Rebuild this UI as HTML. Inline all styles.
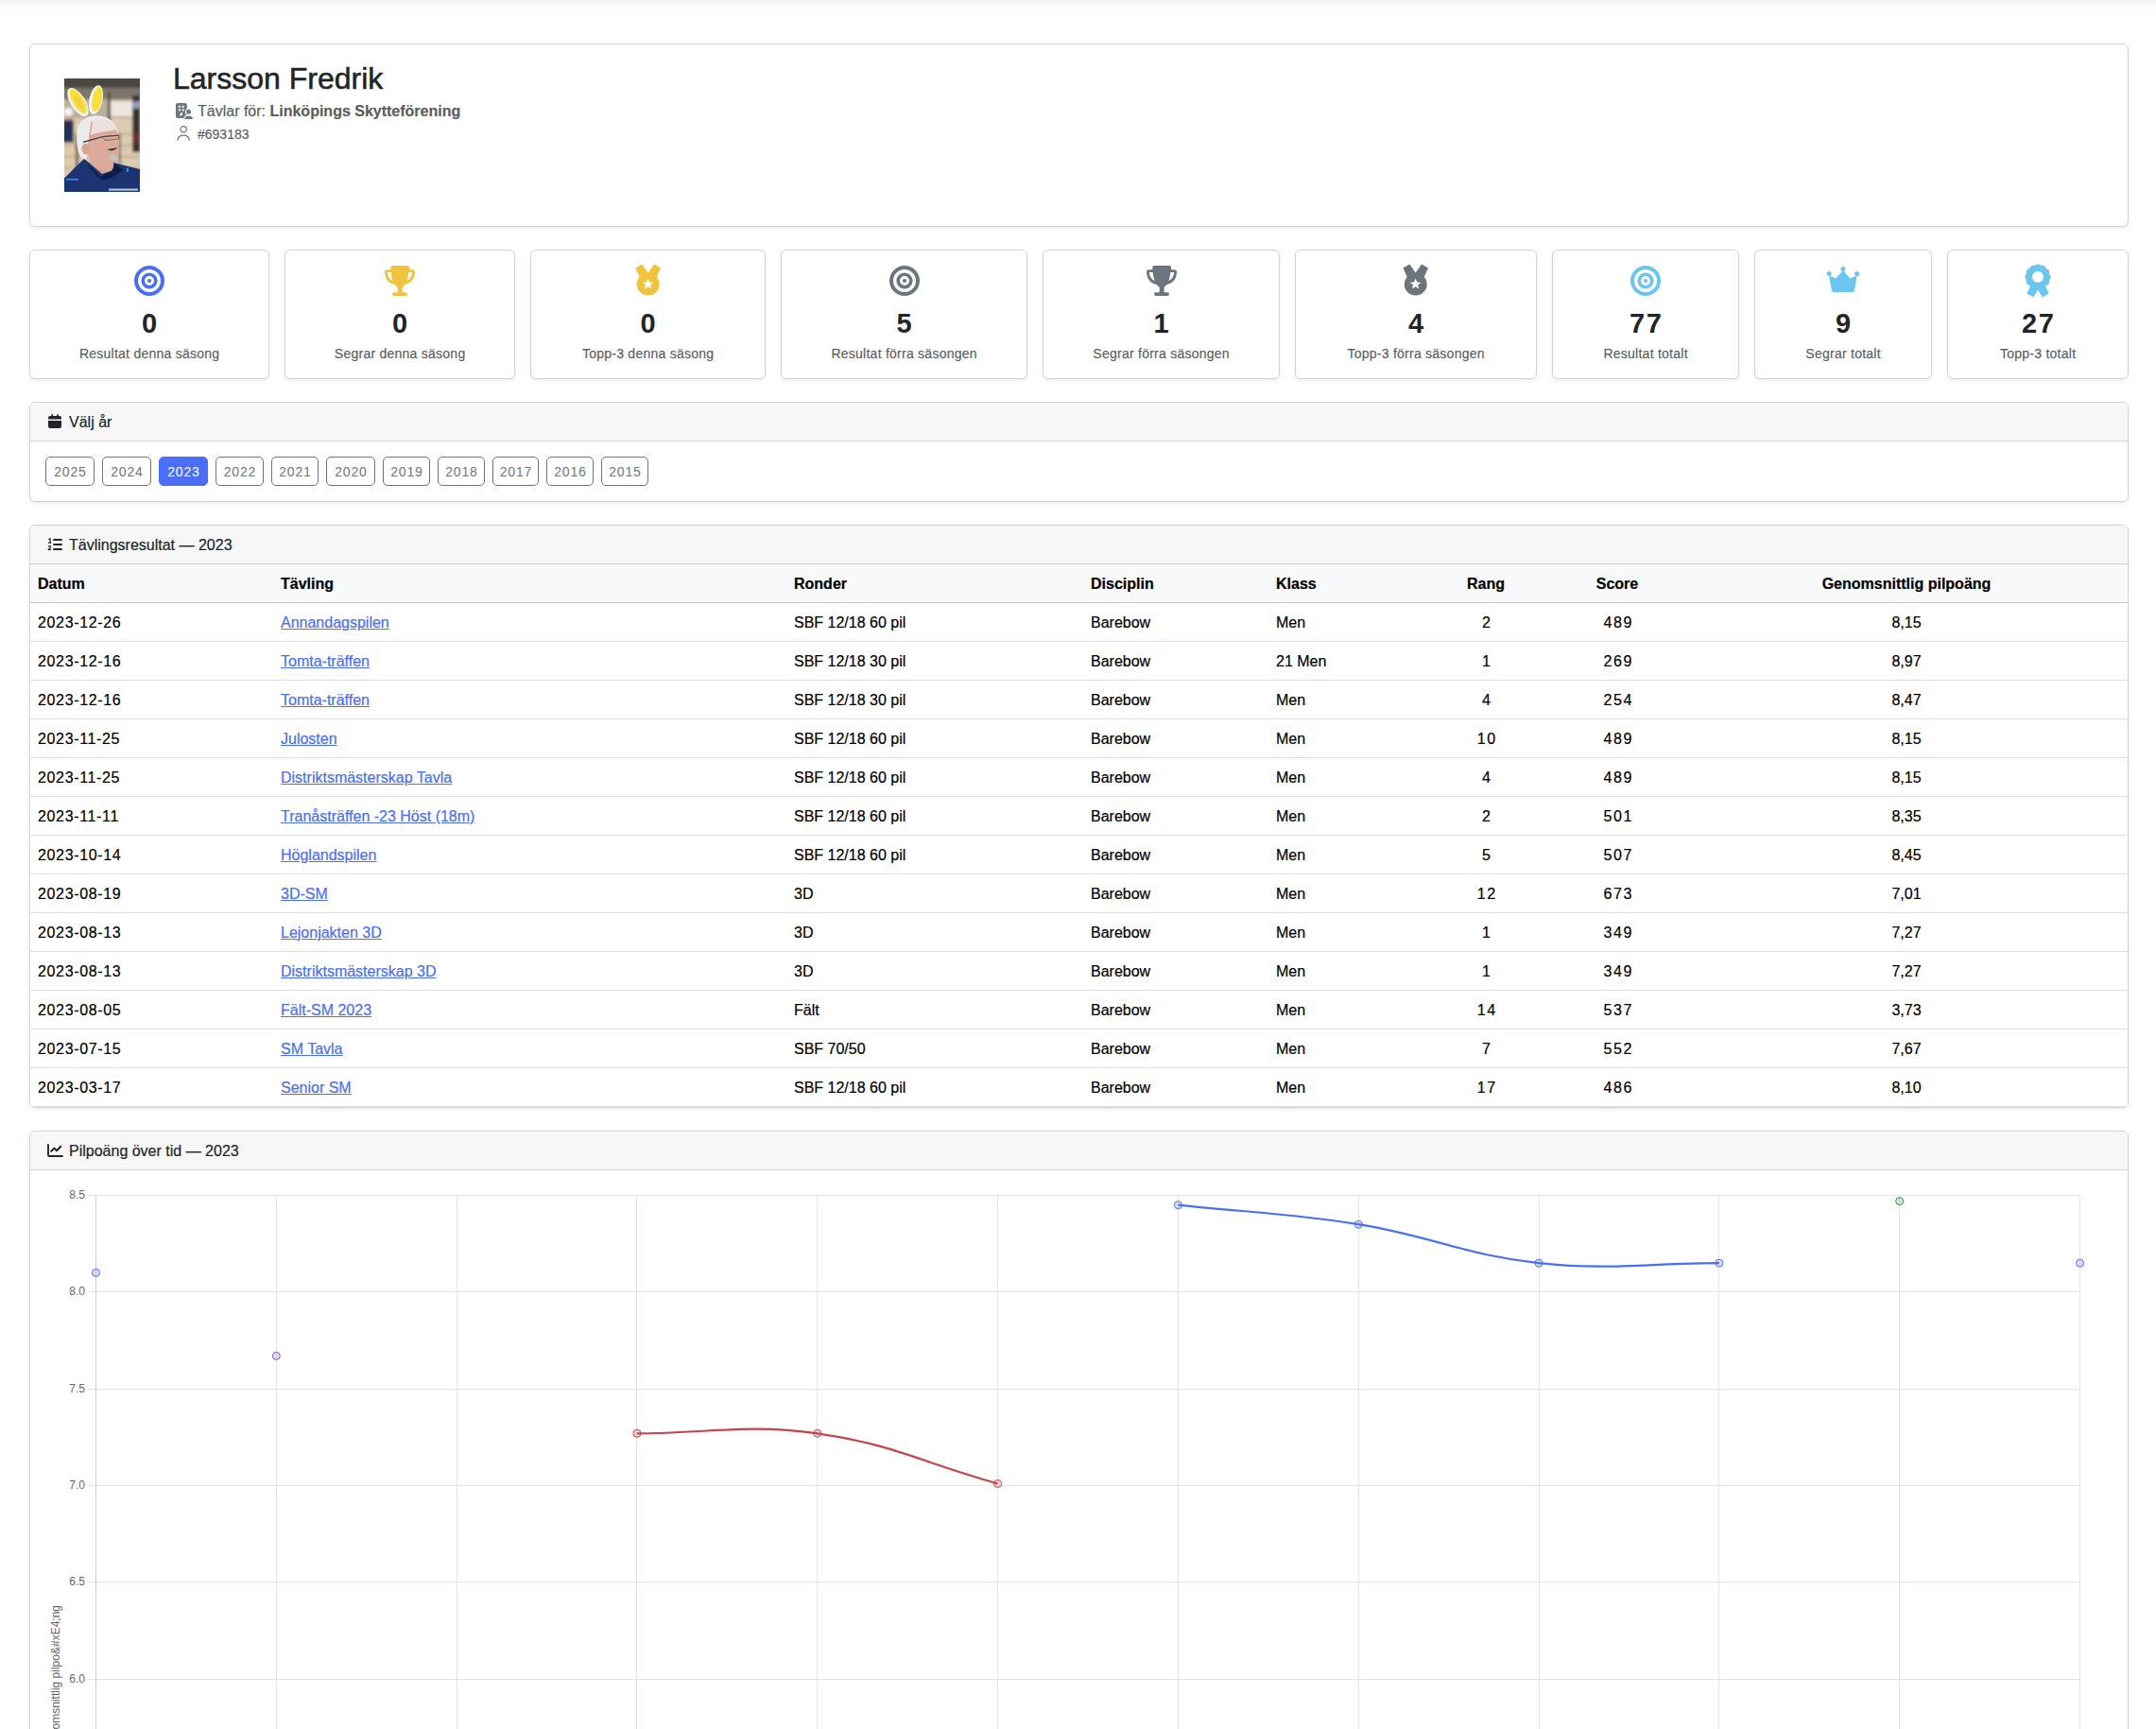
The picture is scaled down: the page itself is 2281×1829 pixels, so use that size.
<!DOCTYPE html><html><head><meta charset="utf-8"><title>Larsson Fredrik</title><style>
*{box-sizing:border-box;margin:0;padding:0}
html,body{width:2281px;height:1829px;overflow:hidden;background:#fff}
body{position:relative;font-family:"Liberation Sans",sans-serif;color:#212529;font-size:16px;line-height:1.5}
.topshade{position:absolute;left:0;top:0;width:2281px;height:16px;background:linear-gradient(to bottom,rgba(0,0,0,0.058) 0,rgba(0,0,0,0.032) 4px,rgba(0,0,0,0.012) 8px,rgba(0,0,0,0) 13px)}
.card{position:absolute;background:#fff;border:1px solid #d2d3d4;border-radius:6px;box-shadow:0 2px 4px rgba(0,0,0,0.075)}
.abs{position:absolute;white-space:nowrap}
.chead{position:absolute;left:0;top:0;right:0;height:41px;background:#f7f7f7;border-bottom:1px solid #d2d3d4;border-radius:5px 5px 0 0}
.chead .t{position:absolute;left:41px;top:9px;line-height:24px;font-size:16px;color:#212529;white-space:nowrap;-webkit-text-stroke:0.2px #212529}
.chead svg{position:absolute;left:18px;top:12px}
.stat .ic{position:absolute;left:50%;top:16px;transform:translateX(-50%)}
.stat .num{position:absolute;left:0;right:0;top:62.5px;font-size:29px;line-height:29px;letter-spacing:1.6px;padding-left:1.6px;font-weight:700;text-align:center;color:#212529}
.stat .lbl{position:absolute;left:0;right:0;top:102px;letter-spacing:0.25px;padding-left:0.25px;font-size:14px;line-height:14px;text-align:center;color:#595c5f;white-space:nowrap;-webkit-text-stroke:0.15px #595c5f}
.btn{position:absolute;top:57px;height:31px;border:1px solid #6c757d;border-radius:5px;color:#6c757d;font-size:14px;line-height:30px;text-align:center;background:#fff;letter-spacing:0.8px;padding-left:0.8px}
.btn.act{background:#4a6ef5;border-color:#4a6ef5;color:#fff}
table{position:absolute;left:0;top:41px;width:2219px;border-collapse:collapse;table-layout:fixed}
th,td{padding:9px 8px 7px;line-height:24px;font-size:16px;text-align:left;white-space:nowrap;color:#000;-webkit-text-stroke:0.2px currentColor}
thead th{background:#f8f9fa;border-bottom:1px solid #c6c7c8;font-weight:700}
tbody td{border-bottom:1px solid #dee2e6;background:#fff}
td.c,th.c{text-align:center}
td.d{letter-spacing:0.65px}
td.n{letter-spacing:1.6px;padding-left:10.6px}
a{color:#4a6ef5;text-decoration:underline;text-underline-offset:1px}
</style></head><body>
<div class="topshade"></div>
<div class="card" style="left:31px;top:46px;width:2221px;height:194px"><svg class="abs" style="left:36px;top:36px" width="80" height="120" viewBox="0 0 80 120">
<defs><filter id="bl" x="-10%" y="-10%" width="120%" height="120%"><feGaussianBlur stdDeviation="1.4"/></filter><filter id="bs" x="-10%" y="-10%" width="120%" height="120%"><feGaussianBlur stdDeviation="0.6"/></filter><clipPath id="pc"><rect width="80" height="120"/></clipPath></defs>
<g clip-path="url(#pc)">
<rect width="80" height="120" fill="#d9cab2"/>
<g filter="url(#bl)">
<rect x="-5" y="-5" width="90" height="15" fill="#4a4740"/>
<rect x="-5" y="10" width="90" height="12" fill="#7d766c"/>
<rect x="0" y="22" width="80" height="20" fill="#b9ad9c"/>
<rect x="48" y="24" width="26" height="16" fill="#ece6dc"/>
<rect x="0" y="42" width="80" height="78" fill="#ddcbb0"/>
<rect x="0" y="58" width="80" height="1.6" fill="#bda888"/>
<rect x="0" y="70" width="80" height="1.6" fill="#bda888"/>
<rect x="0" y="82" width="80" height="1.6" fill="#bda888"/>
<rect x="0" y="94" width="80" height="1.6" fill="#bda888"/>
<rect x="46" y="14" width="3" height="50" fill="#4d4740"/>
<rect x="57.5" y="58" width="2" height="34" fill="#5c5248"/>
<rect x="72" y="18" width="8" height="60" fill="#34322f"/>
<circle cx="76" cy="28" r="4" fill="#8aa2c4"/>
<rect x="74" y="58" width="6" height="9" fill="#7a2a2a"/>
<rect x="0" y="31" width="9" height="9" rx="4" fill="#f3f3f3"/>
<rect x="1" y="40" width="8" height="4" fill="#c89888"/>
<rect x="-2" y="44" width="12" height="24" fill="#263352"/>
<rect x="12" y="60" width="3" height="40" fill="#5a534b"/>
</g>
<g filter="url(#bs)">
<g transform="rotate(-32 14.5 25)"><ellipse cx="14.5" cy="25" rx="7.8" ry="17" fill="#f7f5f0"/><ellipse cx="15.2" cy="24.6" rx="5.8" ry="14.8" fill="#f6e03a"/><ellipse cx="15" cy="26" rx="2.6" ry="9" fill="#f2c544" opacity="0.7"/></g>
<g transform="rotate(12 33.5 22.5)"><ellipse cx="33.5" cy="22.5" rx="7" ry="15.5" fill="#f7f5f0"/><ellipse cx="34.5" cy="21.8" rx="5.2" ry="13.2" fill="#f5df38"/></g>
<path d="M25 88 L52 90 L54 104 L36 108 Z" fill="#d4a494"/>
<path d="M14 52 C18 40 34 36 46 42 C54 46 57 54 57 60 L30 66 C26 74 24 84 22 88 C16 84 11 72 14 52 Z" fill="#eeecea"/>
<path d="M28 46 C40 40 56 48 57.5 62 C59 74 58 88 52 95 C46 100 36 98 30 92 C25 86 24 74 26 62 Z" fill="#dcaa9c"/>
<path d="M30 44 C40 40 52 44 56 54 C48 56 36 56 28 60 Z" fill="#ede0dc"/>
<ellipse cx="23" cy="74.5" rx="4.5" ry="6" fill="#d6a292"/>
<path d="M20 67.4 L41 61.5 L57.5 60.2" stroke="#2e2e2e" stroke-width="1.1" fill="none"/>
<path d="M41 61.5 L57.5 60 L57.8 64 L43 65.5 Z" fill="none" stroke="#555" stroke-width="0.7"/>
<path d="M45.5 75 C49 77.5 54 76.5 56.5 72.6 C53 73.5 49 74 45.5 75 Z" fill="#4a2e26"/>
<path d="M47 73.9 L56 72.7" stroke="#d8cfc0" stroke-width="0.8"/>
<ellipse cx="52.5" cy="83.8" rx="5" ry="3.2" fill="#c9c2bc"/>
<path d="M0 105.6 L20.8 85 L26 89 L40 101 L52 97 L52 89 L80 96 L80 120 L0 120 Z" fill="#1d3672"/>
<path d="M20.8 85 L38 104 L50 98 L54 90 L63 97 L52 104 L42 108 L34 103 Z" fill="#101f48"/>
<rect x="66" y="94.5" width="2" height="4.5" fill="#3e84e8"/>
<rect x="2" y="106" width="13" height="1.6" fill="#3e84e8"/>
<rect x="47" y="116.5" width="31" height="2.2" fill="#e4eaf4" opacity="0.75"/>
</g>
</g>
</svg><div class="abs" style="left:151px;top:19.5px;font-size:32px;line-height:32px;color:#212529;-webkit-text-stroke:0.55px #212529">Larsson Fredrik</div><svg class="abs" style="left:154px;top:62px" width="19" height="18" viewBox="0 0 19 18">
<rect x="0" y="0" width="11.8" height="16" rx="2" fill="#6c757d"/>
<rect x="2.8" y="2.8" width="2.2" height="2" fill="#fff"/><rect x="6.6" y="2.8" width="2.2" height="2" fill="#fff"/>
<rect x="2.8" y="6.4" width="2.2" height="2" fill="#fff"/><rect x="6.6" y="6.4" width="2.2" height="2" fill="#fff"/>
<path d="M4 13.5 L5.2 10.3 L7.4 10.3 L6.2 13.5 Z" fill="#fff"/>
<circle cx="13.5" cy="9.3" r="3.6" fill="#fff"/><circle cx="13.5" cy="9.3" r="2.5" fill="#6c757d"/>
<path d="M8.2 17.4 C8.2 13.6 10.5 12.4 13.6 12.4 C16.7 12.4 18.9 13.6 18.9 17.4 Z" fill="#fff"/>
<path d="M9.4 17 C9.4 14.6 11 13.6 13.6 13.6 C16.2 13.6 17.8 14.6 17.8 17 Z" fill="#6c757d"/>
</svg><div class="abs" style="left:177px;top:63px;font-size:16px;line-height:16px;color:#595c5f;-webkit-text-stroke:0.15px #595c5f">Tävlar för: <b style="color:#595c5f">Linköpings Skytteförening</b></div><svg class="abs" style="left:155px;top:86px" width="15" height="16" viewBox="0 0 15 16">
<circle cx="7.1" cy="3.8" r="3.1" fill="none" stroke="#6c757d" stroke-width="1.2"/>
<path d="M0.9 15.6 C1.2 11.8 3.6 10.2 7.1 10.2 C10.6 10.2 13 11.8 13.3 15.6" fill="none" stroke="#6c757d" stroke-width="1.2"/>
</svg><div class="abs" style="left:177px;top:88px;font-size:14px;line-height:14px;color:#595c5f;-webkit-text-stroke:0.15px #595c5f">#693183</div></div>
<div class="card stat" style="left:31px;top:264px;width:254px;height:137px"><svg class="ic" width="32" height="32" viewBox="0 0 32 32"><circle cx="16" cy="16" r="14" fill="none" stroke="#4a6ef5" stroke-width="4"/><circle cx="16" cy="16" r="6.8" fill="none" stroke="#4a6ef5" stroke-width="3.6"/><circle cx="16" cy="16" r="2.1" fill="#4a6ef5"/></svg><div class="num">0</div><div class="lbl">Resultat denna säsong</div></div>
<div class="card stat" style="left:301px;top:264px;width:244px;height:137px"><svg class="ic" width="32" height="32" viewBox="0 0 32 32"><path fill="#f0c33c" d="M8.3 0 H24 A2 2 0 0 1 26 2 V4.3 H29.6 A2.4 2.4 0 0 1 32 6.8 C31.6 13.5 28.5 18.6 21.6 19.9 L18.6 23 V28.2 H22.1 A1.9 1.9 0 0 1 22.1 32 H9.9 A1.9 1.9 0 0 1 9.9 28.2 H13.7 V23 L10.4 19.9 C3.5 18.6 0.4 13.5 0 6.8 A2.4 2.4 0 0 1 2.4 4.3 H6.3 V2 A2 2 0 0 1 8.3 0 Z M2.8 7 C3.2 11.8 5.2 14.8 8.7 16 C7.6 13.4 7 10.4 6.7 7 Z M29.2 7 H25.3 C25 10.4 24.4 13.4 23.3 16 C26.8 14.8 28.8 11.8 29.2 7 Z"/></svg><div class="num">0</div><div class="lbl">Segrar denna säsong</div></div>
<div class="card stat" style="left:561px;top:264px;width:249px;height:137px"><svg class="ic" style="top:14px" width="28" height="34" viewBox="0 0 28 34"><path fill="#f0c33c" d="M0.4 4.6 L7.3 0.4 L13.6 9.6 L20.1 0.4 L27 4.6 L22.8 13.8 A12 12 0 1 1 4.6 13.8 Z M13.60 15.50 L15.19 19.42 L19.40 19.71 L16.17 22.43 L17.19 26.54 L13.60 24.30 L10.01 26.54 L11.03 22.43 L7.80 19.71 L12.01 19.42 Z" fill-rule="evenodd"/></svg><div class="num">0</div><div class="lbl">Topp-3 denna säsong</div></div>
<div class="card stat" style="left:826px;top:264px;width:261px;height:137px"><svg class="ic" width="32" height="32" viewBox="0 0 32 32"><circle cx="16" cy="16" r="14" fill="none" stroke="#6c757d" stroke-width="4"/><circle cx="16" cy="16" r="6.8" fill="none" stroke="#6c757d" stroke-width="3.6"/><circle cx="16" cy="16" r="2.1" fill="#6c757d"/></svg><div class="num">5</div><div class="lbl">Resultat förra säsongen</div></div>
<div class="card stat" style="left:1103px;top:264px;width:251px;height:137px"><svg class="ic" width="32" height="32" viewBox="0 0 32 32"><path fill="#6c757d" d="M8.3 0 H24 A2 2 0 0 1 26 2 V4.3 H29.6 A2.4 2.4 0 0 1 32 6.8 C31.6 13.5 28.5 18.6 21.6 19.9 L18.6 23 V28.2 H22.1 A1.9 1.9 0 0 1 22.1 32 H9.9 A1.9 1.9 0 0 1 9.9 28.2 H13.7 V23 L10.4 19.9 C3.5 18.6 0.4 13.5 0 6.8 A2.4 2.4 0 0 1 2.4 4.3 H6.3 V2 A2 2 0 0 1 8.3 0 Z M2.8 7 C3.2 11.8 5.2 14.8 8.7 16 C7.6 13.4 7 10.4 6.7 7 Z M29.2 7 H25.3 C25 10.4 24.4 13.4 23.3 16 C26.8 14.8 28.8 11.8 29.2 7 Z"/></svg><div class="num">1</div><div class="lbl">Segrar förra säsongen</div></div>
<div class="card stat" style="left:1370px;top:264px;width:256px;height:137px"><svg class="ic" style="top:14px" width="28" height="34" viewBox="0 0 28 34"><path fill="#6c757d" d="M0.4 4.6 L7.3 0.4 L13.6 9.6 L20.1 0.4 L27 4.6 L22.8 13.8 A12 12 0 1 1 4.6 13.8 Z M13.60 15.50 L15.19 19.42 L19.40 19.71 L16.17 22.43 L17.19 26.54 L13.60 24.30 L10.01 26.54 L11.03 22.43 L7.80 19.71 L12.01 19.42 Z" fill-rule="evenodd"/></svg><div class="num">4</div><div class="lbl">Topp-3 förra säsongen</div></div>
<div class="card stat" style="left:1642px;top:264px;width:198px;height:137px"><svg class="ic" width="32" height="32" viewBox="0 0 32 32"><circle cx="16" cy="16" r="14" fill="none" stroke="#6ac6ee" stroke-width="4"/><circle cx="16" cy="16" r="6.8" fill="none" stroke="#6ac6ee" stroke-width="3.6"/><circle cx="16" cy="16" r="2.1" fill="#6ac6ee"/></svg><div class="num">77</div><div class="lbl">Resultat totalt</div></div>
<div class="card stat" style="left:1856px;top:264px;width:188px;height:137px"><svg class="ic" style="top:17px" width="35" height="28" viewBox="0 0 35 28"><g fill="#6ac6ee"><circle cx="2.7" cy="7.6" r="2.5"/><circle cx="17.4" cy="2.6" r="2.5"/><circle cx="32.1" cy="7.6" r="2.5"/><path d="M2.6 9.5 L9.8 12.4 L17.4 4 L25 12.4 L32.2 9.5 L29.6 24 A3.4 3.4 0 0 1 26.3 27.2 H8.5 A3.4 3.4 0 0 1 5.2 24 Z"/></g></svg><div class="num">9</div><div class="lbl">Segrar totalt</div></div>
<div class="card stat" style="left:2060px;top:264px;width:192px;height:137px"><svg class="ic" style="top:14px" width="28" height="36" viewBox="0 0 28 36"><path fill="#6ac6ee" fill-rule="evenodd" d="M14.00 0.10 L17.26 1.83 L20.95 1.96 L22.91 5.09 L26.04 7.05 L26.17 10.74 L27.90 14.00 L26.17 17.26 L26.04 20.95 L22.91 22.91 L20.95 26.04 L17.26 26.17 L14.00 27.90 L10.74 26.17 L7.05 26.04 L5.09 22.91 L1.96 20.95 L1.83 17.26 L0.10 14.00 L1.83 10.74 L1.96 7.05 L5.09 5.09 L7.05 1.96 L10.74 1.83 Z M14 8 A6 6 0 1 0 14 20 A6 6 0 1 0 14 8 Z"/><path fill="#6ac6ee" d="M6.2 23.5 L2.3 31.6 L9.3 35.6 L14 27.6 L18.7 35.6 L25.7 31.6 L21.8 23.5 Z"/></svg><div class="num">27</div><div class="lbl">Topp-3 totalt</div></div>
<div class="card" style="left:31px;top:425px;width:2221px;height:106px"><div class="chead"><svg width="15" height="15" viewBox="0 0 15 15" style="left:19px;top:12px" fill="#212529"><rect x="3.3" y="0.1" width="1.7" height="3" rx="0.85"/><rect x="9.2" y="0.1" width="1.7" height="3" rx="0.85"/><path d="M0 4.1 A2 2 0 0 1 2 2.1 H12 A2 2 0 0 1 14 4.1 V5.5 H0 Z"/><path d="M0 7.1 H14 V12.9 A2 2 0 0 1 12 14.9 H2 A2 2 0 0 1 0 12.9 Z"/></svg><div class="t">Välj år</div></div><div class="btn" style="left:16px;width:52px">2025</div><div class="btn" style="left:76px;width:52px">2024</div><div class="btn act" style="left:136px;width:52px">2023</div><div class="btn" style="left:196px;width:51px">2022</div><div class="btn" style="left:255px;width:50px">2021</div><div class="btn" style="left:313px;width:52px">2020</div><div class="btn" style="left:373px;width:50px">2019</div><div class="btn" style="left:431px;width:50px">2018</div><div class="btn" style="left:489px;width:49px">2017</div><div class="btn" style="left:546px;width:50px">2016</div><div class="btn" style="left:604px;width:50px">2015</div></div>
<div class="card" style="left:31px;top:555px;width:2221px;height:617px"><div class="chead"><svg width="16" height="14" viewBox="0 0 16 14" style="top:13px" fill="#212529"><rect x="6.1" y="1" width="9.8" height="1.9" rx="0.9"/><rect x="6.1" y="6" width="9.8" height="1.9" rx="0.9"/><rect x="6.1" y="11" width="9.8" height="1.9" rx="0.9"/><path d="M1.2 1.2 L2.6 0.3 H3.7 V4.6 H4.3 V5.7 H1 V4.6 H2.5 V1.6 L1.2 2.3 Z"/><path d="M0.8 9.6 C0.9 8.6 1.6 8.1 2.5 8.1 C3.5 8.1 4.2 8.7 4.2 9.5 C4.2 10.2 3.8 10.7 3.1 11.2 L2.3 11.9 H4.3 V13.1 H0.6 V12.1 L2.3 10.6 C2.8 10.2 3 9.9 3 9.6 C3 9.2 2.8 9 2.4 9 C2.1 9 1.9 9.3 1.9 9.7 Z"/></svg><div class="t">Tävlingsresultat — 2023</div></div><table><colgroup><col style="width:257px"><col style="width:543px"><col style="width:314px"><col style="width:196px"><col style="width:163px"><col style="width:134px"><col style="width:144px"><col style="width:468px"></colgroup><thead><tr><th>Datum</th><th>Tävling</th><th>Ronder</th><th>Disciplin</th><th>Klass</th><th class="c">Rang</th><th class="c">Score</th><th class="c">Genomsnittlig pilpoäng</th></tr></thead><tbody><tr><td class="d">2023-12-26</td><td><a href="#">Annandagspilen</a></td><td>SBF 12/18 60 pil</td><td>Barebow</td><td>Men</td><td class="c n">2</td><td class="c n">489</td><td class="c">8,15</td></tr><tr><td class="d">2023-12-16</td><td><a href="#">Tomta-träffen</a></td><td>SBF 12/18 30 pil</td><td>Barebow</td><td>21 Men</td><td class="c n">1</td><td class="c n">269</td><td class="c">8,97</td></tr><tr><td class="d">2023-12-16</td><td><a href="#">Tomta-träffen</a></td><td>SBF 12/18 30 pil</td><td>Barebow</td><td>Men</td><td class="c n">4</td><td class="c n">254</td><td class="c">8,47</td></tr><tr><td class="d">2023-11-25</td><td><a href="#">Julosten</a></td><td>SBF 12/18 60 pil</td><td>Barebow</td><td>Men</td><td class="c n">10</td><td class="c n">489</td><td class="c">8,15</td></tr><tr><td class="d">2023-11-25</td><td><a href="#">Distriktsmästerskap Tavla</a></td><td>SBF 12/18 60 pil</td><td>Barebow</td><td>Men</td><td class="c n">4</td><td class="c n">489</td><td class="c">8,15</td></tr><tr><td class="d">2023-11-11</td><td><a href="#">Tranåsträffen -23 Höst (18m)</a></td><td>SBF 12/18 60 pil</td><td>Barebow</td><td>Men</td><td class="c n">2</td><td class="c n">501</td><td class="c">8,35</td></tr><tr><td class="d">2023-10-14</td><td><a href="#">Höglandspilen</a></td><td>SBF 12/18 60 pil</td><td>Barebow</td><td>Men</td><td class="c n">5</td><td class="c n">507</td><td class="c">8,45</td></tr><tr><td class="d">2023-08-19</td><td><a href="#">3D-SM</a></td><td>3D</td><td>Barebow</td><td>Men</td><td class="c n">12</td><td class="c n">673</td><td class="c">7,01</td></tr><tr><td class="d">2023-08-13</td><td><a href="#">Lejonjakten 3D</a></td><td>3D</td><td>Barebow</td><td>Men</td><td class="c n">1</td><td class="c n">349</td><td class="c">7,27</td></tr><tr><td class="d">2023-08-13</td><td><a href="#">Distriktsmästerskap 3D</a></td><td>3D</td><td>Barebow</td><td>Men</td><td class="c n">1</td><td class="c n">349</td><td class="c">7,27</td></tr><tr><td class="d">2023-08-05</td><td><a href="#">Fält-SM 2023</a></td><td>Fält</td><td>Barebow</td><td>Men</td><td class="c n">14</td><td class="c n">537</td><td class="c">3,73</td></tr><tr><td class="d">2023-07-15</td><td><a href="#">SM Tavla</a></td><td>SBF 70/50</td><td>Barebow</td><td>Men</td><td class="c n">7</td><td class="c n">552</td><td class="c">7,67</td></tr><tr><td class="d">2023-03-17</td><td><a href="#">Senior SM</a></td><td>SBF 12/18 60 pil</td><td>Barebow</td><td>Men</td><td class="c n">17</td><td class="c n">486</td><td class="c">8,10</td></tr></tbody></table></div>
<div class="card" style="left:31px;top:1196px;width:2221px;height:700px"><div class="chead"><svg width="17" height="16" viewBox="0 0 17 16" style="top:13px"><path d="M1 1 V11.7 A1.3 1.3 0 0 0 2.3 13 H15.9" fill="none" stroke="#212529" stroke-width="1.9" stroke-linecap="round"/><path d="M4.1 7.8 L7.4 4.6 L10 7.2 L14.2 2.7" fill="none" stroke="#212529" stroke-width="2" stroke-linecap="round" stroke-linejoin="round"/></svg><div class="t">Pilpoäng över tid — 2023</div></div></div>
<svg class="abs" style="left:0;top:0" width="2281" height="1829" viewBox="0 0 2281 1829"><line x1="101.5" y1="1264" x2="101.5" y2="1829" stroke="#e4e4e4" stroke-width="1"/><line x1="292.5" y1="1264" x2="292.5" y2="1829" stroke="#e4e4e4" stroke-width="1"/><line x1="483.5" y1="1264" x2="483.5" y2="1829" stroke="#e4e4e4" stroke-width="1"/><line x1="673.5" y1="1264" x2="673.5" y2="1829" stroke="#e4e4e4" stroke-width="1"/><line x1="864.5" y1="1264" x2="864.5" y2="1829" stroke="#e4e4e4" stroke-width="1"/><line x1="1055.5" y1="1264" x2="1055.5" y2="1829" stroke="#e4e4e4" stroke-width="1"/><line x1="1246.5" y1="1264" x2="1246.5" y2="1829" stroke="#e4e4e4" stroke-width="1"/><line x1="1437.5" y1="1264" x2="1437.5" y2="1829" stroke="#e4e4e4" stroke-width="1"/><line x1="1628.5" y1="1264" x2="1628.5" y2="1829" stroke="#e4e4e4" stroke-width="1"/><line x1="1818.5" y1="1264" x2="1818.5" y2="1829" stroke="#e4e4e4" stroke-width="1"/><line x1="2009.5" y1="1264" x2="2009.5" y2="1829" stroke="#e4e4e4" stroke-width="1"/><line x1="2200.5" y1="1264" x2="2200.5" y2="1829" stroke="#e4e4e4" stroke-width="1"/><line x1="93" y1="1264.5" x2="2201" y2="1264.5" stroke="#e4e4e4" stroke-width="1"/><text x="90" y="1268.3" text-anchor="end" font-family="Liberation Sans" font-size="12" fill="#666">8.5</text><line x1="93" y1="1366.5" x2="2201" y2="1366.5" stroke="#e4e4e4" stroke-width="1"/><text x="90" y="1370.3" text-anchor="end" font-family="Liberation Sans" font-size="12" fill="#666">8.0</text><line x1="93" y1="1469.5" x2="2201" y2="1469.5" stroke="#e4e4e4" stroke-width="1"/><text x="90" y="1473.3" text-anchor="end" font-family="Liberation Sans" font-size="12" fill="#666">7.5</text><line x1="93" y1="1571.5" x2="2201" y2="1571.5" stroke="#e4e4e4" stroke-width="1"/><text x="90" y="1575.3" text-anchor="end" font-family="Liberation Sans" font-size="12" fill="#666">7.0</text><line x1="93" y1="1673.5" x2="2201" y2="1673.5" stroke="#e4e4e4" stroke-width="1"/><text x="90" y="1677.3" text-anchor="end" font-family="Liberation Sans" font-size="12" fill="#666">6.5</text><line x1="93" y1="1776.5" x2="2201" y2="1776.5" stroke="#e4e4e4" stroke-width="1"/><text x="90" y="1780.3" text-anchor="end" font-family="Liberation Sans" font-size="12" fill="#666">6.0</text><line x1="101.5" y1="1264" x2="101.5" y2="1829" stroke="#d0d0d0" stroke-width="1"/><text transform="translate(62.5 1698) rotate(-90)" text-anchor="end" font-family="Liberation Sans" font-size="12" fill="#666">Genomsnittlig pilpo&amp;#xE4;ng</text><path d="M1246.4 1274.7 C1322.7 1282.9 1361.5 1283.0 1437.2 1295.2 C1514.2 1307.6 1550.9 1327.9 1628.0 1336.1 C1703.5 1344.2 1742.5 1336.1 1818.9 1336.1" fill="none" stroke="#4a6ef5" stroke-width="2.2"/><path d="M674.0 1516.3 C750.3 1516.3 789.9 1505.8 864.8 1516.3 C942.5 1527.1 979.3 1548.2 1055.6 1569.5" fill="none" stroke="#c8434b" stroke-width="2.2"/><circle cx="101.5" cy="1346.38" r="4" fill="rgba(74,110,245,0.2)" stroke="#4a6ef5" stroke-width="1"/><circle cx="2200.5" cy="1336.145" r="4" fill="rgba(74,110,245,0.2)" stroke="#4a6ef5" stroke-width="1"/><circle cx="1246.409090909091" cy="1274.7350000000001" r="4" fill="rgba(74,110,245,0.2)" stroke="#4a6ef5" stroke-width="1"/><circle cx="1437.2272727272727" cy="1295.2050000000002" r="4" fill="rgba(74,110,245,0.2)" stroke="#4a6ef5" stroke-width="1"/><circle cx="1628.0454545454545" cy="1336.145" r="4" fill="rgba(74,110,245,0.2)" stroke="#4a6ef5" stroke-width="1"/><circle cx="1818.8636363636363" cy="1336.145" r="4" fill="rgba(74,110,245,0.2)" stroke="#4a6ef5" stroke-width="1"/><circle cx="673.9545454545455" cy="1516.281" r="4" fill="rgba(200,67,75,0.2)" stroke="#c8434b" stroke-width="1"/><circle cx="864.7727272727273" cy="1516.281" r="4" fill="rgba(200,67,75,0.2)" stroke="#c8434b" stroke-width="1"/><circle cx="1055.590909090909" cy="1569.5030000000002" r="4" fill="rgba(200,67,75,0.2)" stroke="#c8434b" stroke-width="1"/><circle cx="292.3181818181818" cy="1434.401" r="4" fill="rgba(124,85,200,0.2)" stroke="#7c55c8" stroke-width="1"/><circle cx="2009.681818181818" cy="1270.6409999999998" r="4" fill="rgba(61,138,90,0.2)" stroke="#3d8a5a" stroke-width="1"/></svg>
</body></html>
